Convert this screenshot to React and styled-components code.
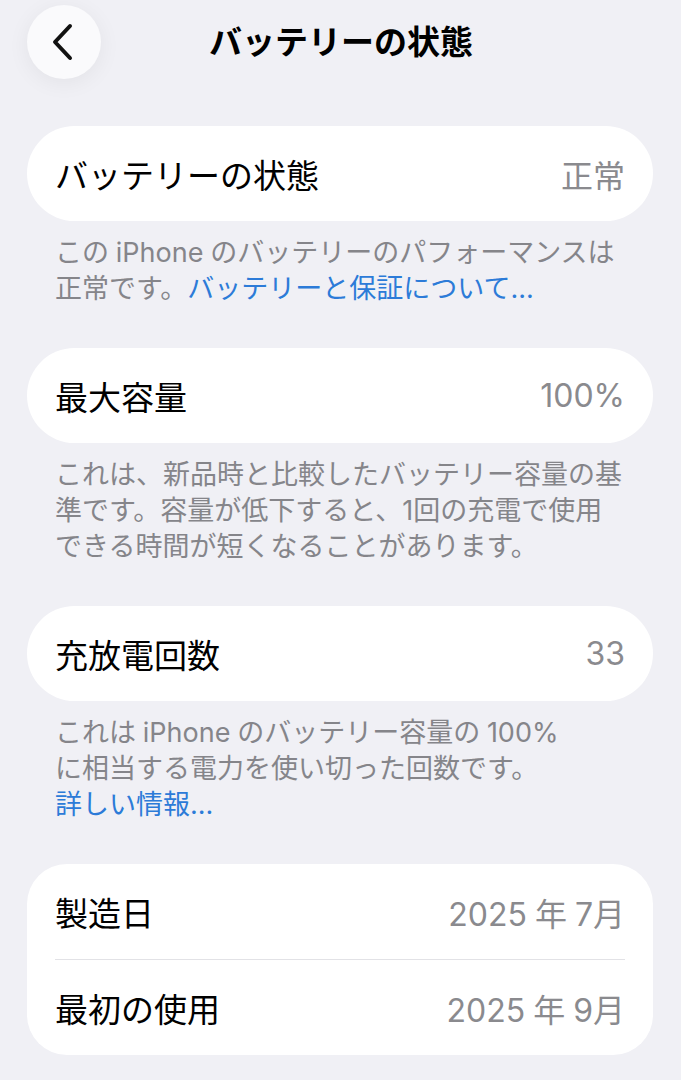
import React from 'react'
import styled, { createGlobalStyle } from 'styled-components'

const GlobalStyle = createGlobalStyle`
  html, body {
    margin: 0;
    padding: 0;
    background: #f0f0f5;
  }
  body {
    font-family: Inter, "Noto Sans CJK JP", "Noto Sans", sans-serif;
    -webkit-font-smoothing: antialiased;
  }
`

// narrow gap used between latin text and kana
const G = '\u2005'

// each note line is a list of segments; link segments are drawn in blue
const sections = [
  {
    id: 'health',
    rows: [{ label: 'バッテリーの状態', value: '正常' }],
    note: [
      [{ text: `この${G}iPhone${G}のバッテリーのパフォーマンスは` }],
      [{ text: '正常です。' }, { text: 'バッテリーと保証について...', link: true }],
    ],
  },
  {
    id: 'capacity',
    rows: [{ label: '最大容量', value: '100%' }],
    note: [
      [{ text: 'これは、新品時と比較したバッテリー容量の基' }],
      [{ text: '準です。容量が低下すると、1回の充電で使用' }],
      [{ text: 'できる時間が短くなることがあります。' }],
    ],
  },
  {
    id: 'cycles',
    rows: [{ label: '充放電回数', value: '33' }],
    note: [
      [{ text: `これは${G}iPhone${G}のバッテリー容量の${G}100%` }],
      [{ text: 'に相当する電力を使い切った回数です。' }],
      [{ text: '詳しい情報...', link: true }],
    ],
  },
  {
    id: 'dates',
    rows: [
      { label: '製造日', value: `2025${G}年${G}7月` },
      { label: '最初の使用', value: `2025${G}年${G}9月` },
    ],
  },
]

const ChevronLeft = () => (
  <svg width="24" height="38" viewBox="0 0 24 38" fill="none">
    <path
      d="M20 3 L5 19 L20 35"
      stroke="#111"
      strokeWidth="4"
      strokeLinecap="round"
      strokeLinejoin="round"
    />
  </svg>
)

const App = () => {
  return (
    <>
      <GlobalStyle />
      <Page>
        <Header>
          <BackButton aria-label="戻る">
            <ChevronLeft />
          </BackButton>
          <Title>バッテリーの状態</Title>
        </Header>

        {sections.map(section => (
          <Section key={section.id}>
            <Card $grouped={section.rows.length > 1}>
              {section.rows.map((row, i) => (
                <Row key={row.label} $divider={i > 0}>
                  <Label>{row.label}</Label>
                  <Value>{row.value}</Value>
                </Row>
              ))}
            </Card>
            {section.note && (
              <Note>
                {section.note.map((line, i) => (
                  <NoteLine key={i}>
                    {line.map((seg, j) =>
                      seg.link ? (
                        <NoteLink key={j}>{seg.text}</NoteLink>
                      ) : (
                        <span key={j}>{seg.text}</span>
                      )
                    )}
                  </NoteLine>
                ))}
              </Note>
            )}
          </Section>
        ))}
      </Page>
    </>
  )
}

export default App

const Page = styled.div`
  width: 681px;
  min-height: 1080px;
  box-sizing: border-box;
  padding: 5px 28px 24px 27px;
`

const Header = styled.header`
  position: relative;
  height: 74px;
  display: flex;
  align-items: center;
  justify-content: center;
  margin-bottom: 47px;
`

const BackButton = styled.button`
  position: absolute;
  left: 0;
  top: 0;
  width: 74px;
  height: 74px;
  border: none;
  border-radius: 50%;
  background: #fafafc;
  box-shadow: 0 4px 22px rgba(0, 0, 0, 0.06);
  display: flex;
  align-items: center;
  justify-content: center;
  padding: 0 4px 0 0;
  cursor: pointer;
`

const Title = styled.h1`
  margin: 0 0 4px;
  font-size: 33px;
  font-weight: 700;
  color: #000;
  transform: translateX(1px);
`

const Section = styled.section`
  margin-bottom: 41px;
`

const Card = styled.div`
  background: #fff;
  border-radius: ${p => (p.$grouped ? '40px' : '48px')};
  padding: 0 28px 0 28px;
`

const Row = styled.div`
  height: 95px;
  display: flex;
  align-items: center;
  justify-content: space-between;
  border-top: ${p => (p.$divider ? '1px solid #e2e2e6' : 'none')};
`

const Label = styled.span`
  font-size: 33px;
  color: #000;
`

const Value = styled.span`
  font-size: 32px;
  color: #8a8a8e;
`

const Note = styled.div`
  margin-top: 14px;
  padding-left: 28px;
  font-size: 27px;
  line-height: 36px;
  color: #85858a;
`

const NoteLine = styled.div`
  white-space: nowrap;
`

const NoteLink = styled.span`
  color: #2c7bd8;
`
